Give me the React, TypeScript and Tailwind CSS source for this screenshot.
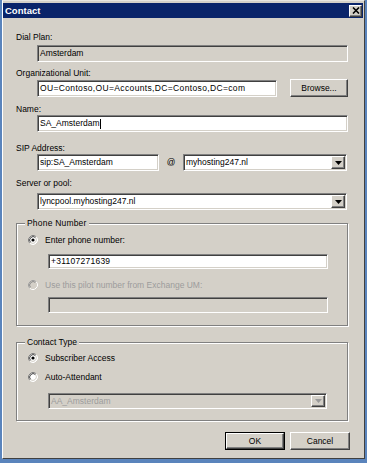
import React from 'react';

const sunken =
  'border border-t-[#808080] border-l-[#808080] border-r-white border-b-white shadow-[inset_1px_1px_0_#404040,inset_-1px_-1px_0_#d4d0c8]';
const raised =
  'border border-t-white border-l-white border-r-[#404040] border-b-[#404040] shadow-[inset_-1px_-1px_0_#808080]';
const etched = 'border border-[#808080] shadow-[1px_1px_0_#ffffff,inset_1px_1px_0_#ffffff]';

const Radio: React.FC<{ checked?: boolean; disabled?: boolean }> = ({ checked, disabled }) => (
  <svg width="10" height="10" viewBox="0 0 10 10" className="shrink-0">
    <circle cx="5" cy="5" r="4" fill={disabled ? '#d4d0c8' : '#ffffff'} />
    <path d="M1.82 8.18 A4.5 4.5 0 0 1 8.18 1.82" fill="none" stroke={disabled ? '#a0a0a0' : '#808080'} strokeWidth="1" />
    <path d="M8.18 1.82 A4.5 4.5 0 0 1 1.82 8.18" fill="none" stroke="#ffffff" strokeWidth="1" />
    <path d="M2.53 7.47 A3.5 3.5 0 0 1 7.47 2.53" fill="none" stroke={disabled ? '#8a8a8a' : '#404040'} strokeWidth="1" />
    <path d="M7.47 2.53 A3.5 3.5 0 0 1 2.53 7.47" fill="none" stroke="#d4d0c8" strokeWidth="1" />
    {checked && <circle cx="5" cy="5" r="1.6" fill="#000000" />}
  </svg>
);

const Arrow: React.FC<{ disabled?: boolean }> = ({ disabled }) => (
  <div className={`${raised} w-[14px] self-stretch flex items-center justify-center bg-[#d4d0c8]`}>
    <svg width="7" height="4" viewBox="0 0 7 4">
      <polygon points="0,0 7,0 3.5,4" fill={disabled ? '#9a9a9a' : '#000000'} />
    </svg>
  </div>
);

export default function App() {
  return (
    <div className="w-[367px] h-[463px] flex flex-col px-[2px] pb-[4px] bg-[#5a84bc] font-['Liberation_Sans',Arial,sans-serif] text-[8.5px] text-black">
      <div className="flex-1 flex flex-col bg-[#d4d0c8] border border-t-[#e8e6e0] border-l-white border-r-[#404040] border-b-[#404040] pt-[2px] pr-[1px]">
        {/* title bar */}
        <div className="h-[15px] bg-[#0a246a] flex items-center justify-between pl-[2px] pr-[1px]">
          <span className="text-white font-bold text-[9.5px] leading-none">Contact</span>
          <div className={`${raised} w-[13px] h-[12px] bg-[#d4d0c8] flex items-center justify-center`}>
            <svg width="8" height="7" viewBox="0 0 8 7">
              <path d="M1 0.5 L7 6.5 M7 0.5 L1 6.5" stroke="#000" strokeWidth="1.6" />
            </svg>
          </div>
        </div>

        <div className="flex flex-col pl-[13px]">
          <div className="mt-[14px] h-[10px] leading-[10px]">Dial Plan:</div>
          <div className={`${sunken} mt-[3px] ml-[21px] h-[17px] w-[311px] bg-[#d4d0c8] flex items-center pl-[2px]`}>Amsterdam</div>

          <div className="mt-[6px] h-[10px] leading-[10px]">Organizational Unit:</div>
          <div className="mt-[1px] ml-[21px] h-[18px] flex">
            <div className={`${sunken} mt-[1px] h-[17px] w-[240px] bg-white flex items-center pl-[2px] whitespace-nowrap tracking-[0.35px]`}>
              OU=Contoso,OU=Accounts,DC=Contoso,DC=com
            </div>
            <div className={`${raised} ml-[13px] w-[58px] h-[18px] bg-[#d4d0c8] flex items-center justify-center`}>Browse...</div>
          </div>

          <div className="mt-[7px] h-[10px] leading-[10px]">Name:</div>
          <div className={`${sunken} mt-[1px] ml-[21px] h-[17px] w-[311px] bg-white flex items-center pl-[2px]`}>
            SA_Amsterdam<span className="w-px h-[10px] bg-black" />
          </div>

          <div className="mt-[11px] h-[10px] leading-[10px]">SIP Address:</div>
          <div className="mt-[1px] ml-[21px] h-[17px] flex items-center">
            <div className={`${sunken} h-[17px] w-[122px] bg-white flex items-center pl-[2px]`}>sip:SA_Amsterdam</div>
            <div className="w-[24px] text-center">@</div>
            <div className={`${sunken} h-[17px] w-[164px] bg-white flex p-[1px]`}>
              <div className="flex-1 flex items-center pl-[1px]">myhosting247.nl</div>
              <Arrow />
            </div>
          </div>

          <div className="mt-[7px] h-[10px] leading-[10px]">Server or pool:</div>
          <div className={`${sunken} mt-[5px] ml-[21px] h-[17px] w-[310px] bg-white flex p-[1px]`}>
            <div className="flex-1 flex items-center pl-[1px]">lyncpool.myhosting247.nl</div>
            <Arrow />
          </div>

          {/* Phone Number group */}
          <div className={`${etched} relative mt-[13px] h-[103px] w-[332px] flex flex-col pl-[11px]`}>
            <span className="absolute left-[8px] -top-[6px] px-[2px] bg-[#d4d0c8] leading-[10px] tracking-[0.2px]">Phone Number</span>
            <div className="mt-[11px] h-[10px] flex items-center">
              <Radio checked />
              <span className="ml-[7px] leading-[10px]">Enter phone number:</span>
            </div>
            <div className={`${sunken} mt-[9px] ml-[20px] h-[15px] w-[280px] bg-white flex items-center pl-[2px] tracking-[0.25px]`}>+31107271639</div>
            <div className="mt-[11px] h-[10px] flex items-center">
              <Radio disabled />
              <span className="ml-[7px] leading-[10px] text-[#9c9c9c]">Use this pilot number from Exchange UM:</span>
            </div>
            <div className={`${sunken} mt-[7px] ml-[20px] h-[16px] w-[280px] bg-[#d4d0c8]`} />
          </div>

          {/* Contact Type group */}
          <div className={`${etched} relative mt-[16px] h-[79px] w-[332px] flex flex-col pl-[11px]`}>
            <span className="absolute left-[8px] -top-[6px] px-[2px] bg-[#d4d0c8] leading-[10px]">Contact Type</span>
            <div className="mt-[10px] h-[10px] flex items-center">
              <Radio checked />
              <span className="ml-[7px] leading-[10px]">Subscriber Access</span>
            </div>
            <div className="mt-[9px] h-[10px] flex items-center">
              <Radio />
              <span className="ml-[7px] leading-[10px]">Auto-Attendant</span>
            </div>
            <div className={`${sunken} mt-[11px] ml-[20px] h-[16px] w-[279px] bg-[#d4d0c8] flex p-[1px]`}>
              <div className="flex-1 flex items-center pl-[1px] text-[#9c9c9c]">AA_Amsterdam</div>
              <Arrow disabled />
            </div>
          </div>

          <div className="mt-[11px] ml-[209px] h-[18px] flex gap-[5px]">
            <div className="w-[60px] h-[18px] border border-black">
              <div className={`${raised} w-full h-full bg-[#d4d0c8] flex items-center justify-center`}>OK</div>
            </div>
            <div className={`${raised} w-[60px] h-[18px] bg-[#d4d0c8] flex items-center justify-center`}>Cancel</div>
          </div>
        </div>
      </div>
    </div>
  );
}
